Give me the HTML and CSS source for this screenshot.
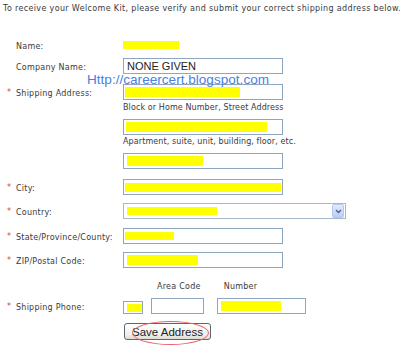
FILE: index.html
```html
<!DOCTYPE html>
<html>

	<head>
		<meta charset="UTF-8">
		<title>Welcome Kit</title>
		<link rel="stylesheet" href="styles.css">
	</head>

	<body>
		<p class="intro">To receive your Welcome Kit, please verify and submit your correct shipping address below.</p>
		<div class="form">
			<div class="row r-name">
				<div class="label"><span class="req"></span>Name:</div>
				<div class="field"><span class="mark m-name"></span></div>
			</div>
			<div class="row r-company">
				<div class="label"><span class="req"></span>Company Name:</div>
				<div class="field">
					<div class="box">NONE GIVEN</div>
				</div>
			</div>
			<div class="row r-addr1">
				<div class="label"><span class="req">*</span>Shipping Address:</div>
				<div class="field">
					<div class="box"><span class="mark m-addr1"></span></div>
				</div>
			</div>
			<div class="row hint r-hint1">
				<div class="label"></div>
				<div class="field">Block or Home Number, Street Address</div>
			</div>
			<div class="row r-addr2">
				<div class="label"></div>
				<div class="field">
					<div class="box"><span class="mark m-addr2"></span></div>
				</div>
			</div>
			<div class="row hint r-hint2">
				<div class="label"></div>
				<div class="field">Apartment, suite, unit, building, floor, etc.</div>
			</div>
			<div class="row r-addr3">
				<div class="label"></div>
				<div class="field">
					<div class="box"><span class="mark m-addr3"></span></div>
				</div>
			</div>
			<div class="row r-city">
				<div class="label"><span class="req">*</span>City:</div>
				<div class="field">
					<div class="box"><span class="mark m-city"></span></div>
				</div>
			</div>
			<div class="row r-country">
				<div class="label"><span class="req">*</span>Country:</div>
				<div class="field">
					<div class="box select">
						<span class="mark m-country"></span>
						<span class="drop">
							<svg width="7" height="5" viewBox="0 0 7 5"><path d="M1 1 L3.5 3.5 L6 1" fill="none" stroke="#4d6185" stroke-width="1.4"/></svg>
						</span>
					</div>
				</div>
			</div>
			<div class="row r-state">
				<div class="label"><span class="req">*</span>State/Province/County:</div>
				<div class="field">
					<div class="box"><span class="mark m-state"></span></div>
				</div>
			</div>
			<div class="row r-zip">
				<div class="label"><span class="req">*</span>ZIP/Postal Code:</div>
				<div class="field">
					<div class="box"><span class="mark m-zip"></span></div>
				</div>
			</div>
			<div class="row r-phonehead">
				<div class="label"></div>
				<div class="field">
					<span class="head-area">Area Code</span>
					<span class="head-num">Number</span>
				</div>
			</div>
			<div class="row r-phone">
				<div class="label"><span class="req">*</span>Shipping Phone:</div>
				<div class="field">
					<div class="box cc"><span class="mark m-cc"></span></div>
					<div class="box area"></div>
					<div class="box num"><span class="mark m-num"></span></div>
				</div>
			</div>
			<div class="row r-save">
				<div class="label"></div>
				<div class="field">
					<div class="save-wrap">
						<button class="save">Save Address</button>
						<span class="circle"></span>
					</div>
				</div>
			</div>
		</div>
		<div class="watermark">Http://careercert.blogspot.com</div>
	</body>

</html>
```

FILE: styles.css
```css
* {
	margin: 0;
	padding: 0;
}

body {
	font-family: "DejaVu Sans", Verdana, sans-serif;
	font-size: 8px;
	letter-spacing: 0.25px;
	color: #3a3a3a;
	background: #fff;
	position: relative;
	width: 400px;
	height: 357px;
	overflow: hidden;
}

.intro {
	padding: 4px 0 0 3px;
	line-height: 10px;
	white-space: nowrap;
	letter-spacing: 0.35px;
}

.row {
	display: flex;
	align-items: center;
	min-height: 16px;
}

.label {
	width: 123px;
	flex: none;
	display: flex;
	align-items: center;
	padding-top: 2px;
	box-sizing: border-box;
	white-space: nowrap;
}

.req {
	display: inline-block;
	width: 9px;
	margin-left: 7px;
	color: #e03c3c;
	align-self: flex-start;
	line-height: 8px;
}

.field {
	display: flex;
	align-items: center;
}

.box {
	width: 160px;
	height: 16px;
	box-sizing: border-box;
	border: 1px solid #8fa6c0;
	background: #fff;
	display: flex;
	align-items: center;
	padding-left: 1px;
	font-family: "Liberation Sans Narrow", "Liberation Sans", Arial, sans-serif;
	font-size: 11px;
	letter-spacing: 0;
	color: #222;
}

.r-company .box {
	padding-left: 3px;
}

.mark {
	display: inline-block;
	background: #ff0;
	height: 9px;
}

.m-name { width: 56px; height: 8px; }
.m-addr1 { width: 115px; height: 10px; }
.m-addr2 { width: 141px; height: 10px; margin-left: 1px; }
.m-addr3 { width: 76px; height: 10px; margin-left: 2px; }
.m-city { width: 156px; height: 9px; }
.m-country { width: 90px; height: 8px; margin-left: 2px; }
.m-state { width: 49px; height: 8px; }
.m-zip { width: 71px; height: 10px; margin-left: 2px; }
.m-cc { width: 17px; height: 8px; margin-left: 2px; }
.m-num { width: 60px; height: 10px; margin-left: 2px; }

/* vertical spacing of rows */
.r-name { margin-top: 23px; }
.r-company { margin-top: 5px; }
.r-addr1 { margin-top: 10px; }
.hint { min-height: 10px; margin-top: 2px; letter-spacing: 0.1px; }
.hint .label { padding-top: 0; }
.r-addr2 { margin-top: 7px; }
.r-hint2 { margin-top: 1px; }
.r-addr3 { margin-top: 7px; }
.r-city { margin-top: 10px; }
.r-country { margin-top: 8px; }
.r-state { margin-top: 9px; }
.r-zip { margin-top: 8px; }
.r-phonehead { margin-top: 13px; min-height: 10px; }
.r-phone { margin-top: 7px; }
.r-save { margin-top: 9px; }

.select {
	width: 223px;
	justify-content: space-between;
	padding-right: 1px;
	border-color: #a9b8c9;
}

.drop {
	width: 12px;
	height: 14px;
	box-sizing: border-box;
	border: 1px solid #b6c8ef;
	border-radius: 2px;
	background: linear-gradient(#e2ebfe, #b9cdf7);
	display: flex;
	align-items: center;
	justify-content: center;
}

.head-area {
	margin-left: 34px;
}

.head-num {
	margin-left: 23px;
}

.r-phone .field {
	align-items: flex-end;
}

.cc {
	width: 20px;
	height: 13px;
	padding-left: 1px;
}

.area {
	width: 53px;
	margin-left: 8px;
}

.num {
	width: 89px;
	margin-left: 13px;
}

.save-wrap {
	position: relative;
	margin-left: 1px;
}

.save {
	display: block;
	width: 87px;
	height: 17px;
	border: 1px solid #5d6772;
	border-radius: 3px;
	background: linear-gradient(#ffffff, #f1f0ec 70%, #dddbd3);
	font-family: "Liberation Sans Narrow", "Liberation Sans", Arial, sans-serif;
	font-size: 11.5px;
	letter-spacing: 0;
	color: #222;
}

.circle {
	position: absolute;
	left: 8px;
	top: -2px;
	width: 77px;
	height: 24px;
	box-sizing: border-box;
	border: 1px solid #e8606a;
	border-radius: 50%;
}

.watermark {
	position: absolute;
	left: 87px;
	top: 72px;
	font-family: "Liberation Sans", Arial, sans-serif;
	font-size: 13.6px;
	letter-spacing: 0;
	color: #4a7fe3;
	white-space: nowrap;
}
```
